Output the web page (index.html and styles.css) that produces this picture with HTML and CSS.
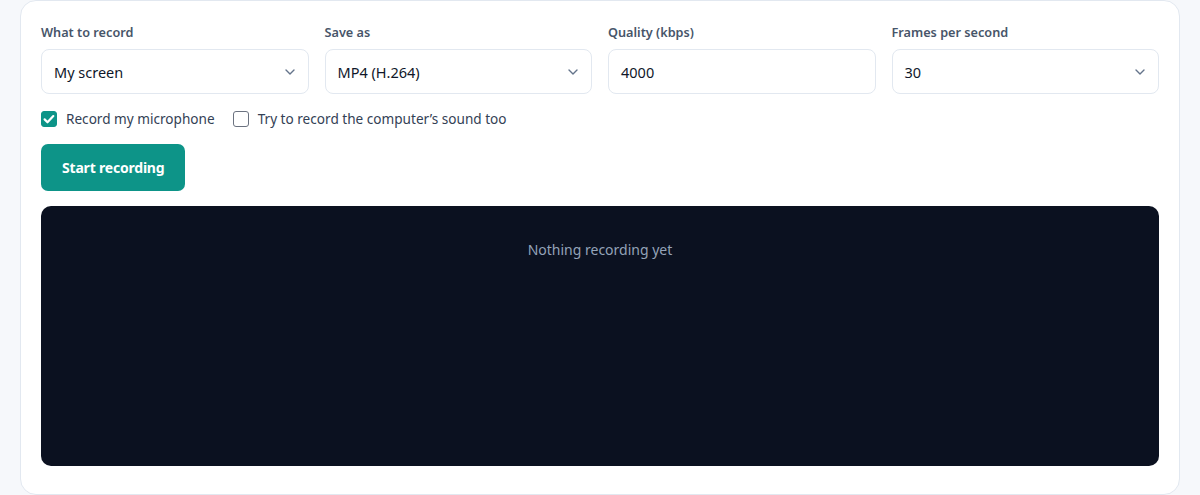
FILE: index.html
```html
<!DOCTYPE html>
<html lang="en">
<head>
<meta charset="utf-8">
<title>Screen recorder</title>
<link rel="stylesheet" href="styles.css">
</head>
<body>
<main class="card">
  <div class="fields">
    <label class="field">
      <span class="field-label">What to record</span>
      <span class="control select">
        <span class="value">My screen</span>
        <svg class="chev" viewBox="0 0 10 6" width="10" height="6"><path d="M1 1l4 4 4-4" fill="none" stroke="#64748b" stroke-width="1.4" stroke-linecap="round" stroke-linejoin="round"/></svg>
      </span>
    </label>
    <label class="field">
      <span class="field-label">Save as</span>
      <span class="control select">
        <span class="value">MP4 (H.264)</span>
        <svg class="chev" viewBox="0 0 10 6" width="10" height="6"><path d="M1 1l4 4 4-4" fill="none" stroke="#64748b" stroke-width="1.4" stroke-linecap="round" stroke-linejoin="round"/></svg>
      </span>
    </label>
    <label class="field">
      <span class="field-label">Quality (kbps)</span>
      <span class="control">
        <span class="value">4000</span>
      </span>
    </label>
    <label class="field">
      <span class="field-label">Frames per second</span>
      <span class="control select">
        <span class="value">30</span>
        <svg class="chev" viewBox="0 0 10 6" width="10" height="6"><path d="M1 1l4 4 4-4" fill="none" stroke="#64748b" stroke-width="1.4" stroke-linecap="round" stroke-linejoin="round"/></svg>
      </span>
    </label>
  </div>
  <div class="checks">
    <label class="check">
      <span class="box checked">
        <svg viewBox="0 0 16 16" width="16" height="16"><path d="M3.6 8.4l2.9 2.9 5.8-6.2" fill="none" stroke="#fff" stroke-width="2.2" stroke-linecap="round" stroke-linejoin="round"/></svg>
      </span>
      <span>Record my microphone</span>
    </label>
    <label class="check">
      <span class="box"></span>
      <span>Try to record the computer’s sound too</span>
    </label>
  </div>
  <button class="start">Start recording</button>
  <section class="preview">
    <p class="empty">Nothing recording yet</p>
  </section>
</main>
</body>
</html>
```
FILE: styles.css
```css
* { box-sizing: border-box; }
html, body { margin: 0; }
body {
  background: #f6f8fb;
  font-family: "Noto Sans", "Open Sans", sans-serif;
  color: #0f172a;
}
.card {
  margin: 0 20px;
  height: 495px;
  background: #fff;
  border: 1px solid #e2e8f0;
  border-radius: 16px;
  padding: 22px 20px 28px;
  display: flex;
  flex-direction: column;
}
.fields {
  display: grid;
  grid-template-columns: repeat(4, 1fr);
  gap: 16px;
}
.field {
  display: flex;
  flex-direction: column;
  gap: 7px;
}
.field-label {
  font-size: 12.7px;
  font-weight: 600;
  color: #475569;
  line-height: 19px;
}
.control {
  height: 45px;
  border: 1px solid #e2e8f0;
  border-radius: 8px;
  display: flex;
  align-items: center;
  justify-content: space-between;
  padding: 0 13px 0 12px;
  font-size: 14.5px;
  color: #0f172a;
}
.chev { display: block; }
.checks {
  display: flex;
  gap: 18px;
  margin-top: 16px;
  font-size: 13.6px;
  color: #334155;
}
.check {
  display: flex;
  align-items: center;
  gap: 9px;
  line-height: 18px;
}
.box {
  width: 16px;
  height: 16px;
  border: 1px solid #6b7280;
  border-radius: 3px;
  background: #fff;
  display: block;
}
.box.checked {
  background: #0d9488;
  border-color: #0d9488;
}
.box svg { display: block; margin: -1px; }
.start {
  align-self: flex-start;
  margin-top: 16px;
  height: 47px;
  padding: 0 21px;
  border: 0;
  border-radius: 7px;
  background: #0d9488;
  color: #fff;
  font-family: inherit;
  font-size: 14px;
  font-weight: 700;
  letter-spacing: -0.2px;
}
.preview {
  margin-top: 15px;
  flex: 1;
  background: #0b1120;
  border-radius: 10px;
  padding-top: 34px;
  text-align: center;
}
.empty {
  margin: 0;
  font-size: 14px;
  color: #94a3b8;
}
```
